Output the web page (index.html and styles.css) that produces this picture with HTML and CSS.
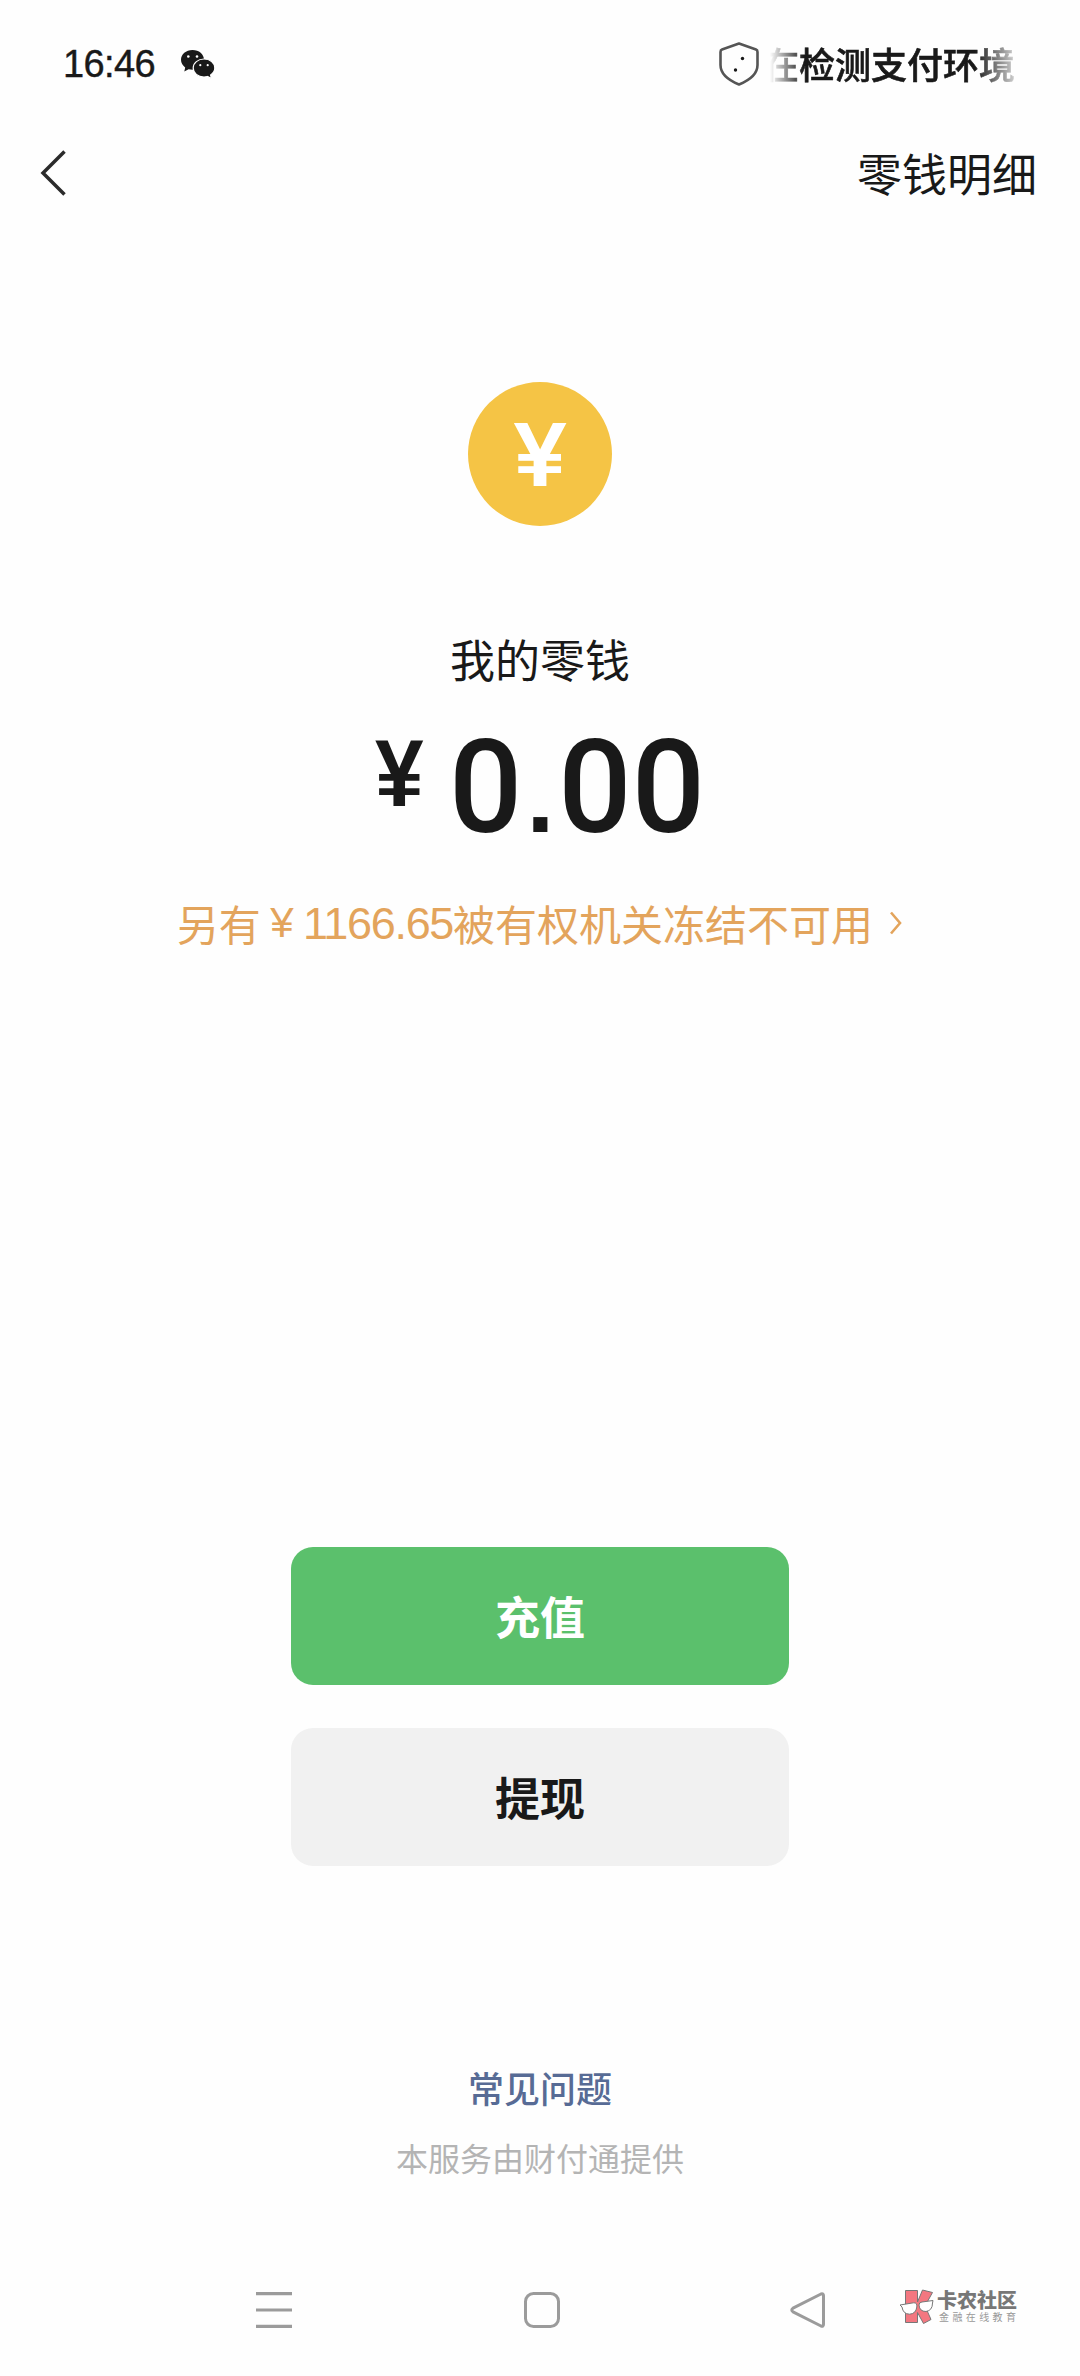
FILE: index.html
```html
<!DOCTYPE html>
<html lang="zh-CN">
<head>
<meta charset="utf-8">
<title>零钱</title>
<link rel="stylesheet" href="styles.css">
</head>
<body>
<div class="screen">
  <header class="status">
    <span class="time">16:46</span>
    <svg class="wechat" width="36" height="32" viewBox="0 0 36 32">
      <path fill="#191919" d="M12.500 2C6 2 1 6.300 1 11.800c0 3.100 1.600 5.800 4.200 7.600L4.300 23.500l4.300-2.200c1.200.3 2.600.5 3.900.5 6.500 0 11.500-4.400 11.500-10S19 2 12.500 2z"/>
      <path fill="#191919" stroke="#fff" stroke-width="1.200" d="M24 11c-6 0-10.800 4-10.800 9s4.800 9 10.800 9c1.200 0 2.400-.2 3.500-.5l4 2-.9-3.600c2.600-1.700 4.200-4.100 4.200-6.900 0-5-4.800-9-10.800-9z"/>
      <g fill="#fff"><circle cx="8.300" cy="8.500" r="1.300"/><circle cx="17" cy="8.500" r="1.300"/><circle cx="20.300" cy="17.200" r="1.100"/><circle cx="27.700" cy="17.200" r="1.100"/></g>
    </svg>
    <div class="security">
      <svg class="shield" width="42" height="46" viewBox="0 0 42 46">
        <path fill="none" stroke="#555" stroke-width="2.600" stroke-linejoin="round" d="M21 2.500 L38 8.500 Q39.500 9 39.500 11 V24 Q39.500 36 21 43.500 Q2.500 36 2.500 24 V11 Q2.500 9 4 8.500 Z"/>
        <circle cx="24.500" cy="17.500" r="1.700" fill="#191919"/><circle cx="17.500" cy="29" r="1.700" fill="#191919"/>
      </svg>
      <div class="ticker"><span>在检测支付环境</span></div>
    </div>
  </header>
  <nav class="navbar">
    <svg width="26" height="48" viewBox="0 0 26 48"><path fill="none" stroke="#2b2b2b" stroke-width="3.500" d="M24.500 2.500 L3 24 L24.500 45.500"/></svg>
    <span>零钱明细</span>
  </nav>
  <main class="content">
    <div class="coin"><span>¥</span></div>
    <h1 class="title">我的零钱</h1>
    <div class="amount"><span class="yen">¥</span><span class="value">0<span class="point">.</span>00</span></div>
    <div class="frozen">
      <span>另有</span><span class="frozen-yen">¥</span><span class="frozen-num">1166.65</span><span>被有权机关冻结不可用</span>
      <svg width="14" height="26" viewBox="0 0 14 26"><path fill="none" stroke="#e3a45c" stroke-width="2.600" d="M2 2.500 L11 13 L2 23.500"/></svg>
    </div>
    <div class="actions">
      <button class="btn primary">充值</button>
      <button class="btn">提现</button>
    </div>
    <footer class="foot">
      <a class="faq">常见问题</a>
      <p class="provider">本服务由财付通提供</p>
    </footer>
  </main>
  <div class="sysbar">
    <svg class="menu" width="36" height="36" viewBox="0 0 36 36"><path stroke="#9b9b9b" stroke-width="3.200" d="M0 1.600H36M0 18H36M0 34.400H36"/></svg>
    <svg class="home" width="36" height="36" viewBox="0 0 36 36"><rect x="1.500" y="1.500" width="33" height="33" rx="8" fill="none" stroke="#9b9b9b" stroke-width="3"/></svg>
    <svg class="back" width="36" height="36" viewBox="0 0 36 36"><path fill="none" stroke="#9b9b9b" stroke-width="3" stroke-linejoin="round" d="M3 16.200 L31 2 Q33.500 1 33.500 3.800 V32.200 Q33.500 35 31 34 L3 19.800 Q.5 18 3 16.200Z"/></svg>
    <div class="brand">
      <svg width="36" height="38" viewBox="0 0 36 38">
        <path fill="#f37780" stroke="#777" stroke-width="1" stroke-linejoin="round" d="M6.500 2.500H18.500V14L23.500 2L33.500 4.500L26 18L32 31.500L24.500 35.500L18.500 24.500V34.500H6.500Z"/>
        <path fill="#fff" stroke="#777" stroke-width="1" d="M1 17 L14.500 14.800 Q18.500 14.500 17.800 19 Q17 25.800 10.500 26.200 Q4 26 3 19Z"/>
        <path fill="#fff" stroke="#777" stroke-width="1" d="M20 17 Q20 14.200 23 14 L34 12.500 L33.500 15 Q33.500 22.500 27 23.500 Q20.500 23.500 20 17Z"/>
      </svg>
      <div class="brand-text"><b>卡农社区</b><small>金融在线教育</small></div>
    </div>
  </div>
</div>
</body>
</html>
```
FILE: styles.css
```css
* { box-sizing: border-box; margin: 0; padding: 0; }
body { background: #fff; }
.screen {
  width: 1080px; height: 2376px; background: #fefefe; color: #191919;
  font-family: "Liberation Sans", "Noto Sans CJK SC", sans-serif;
  display: flex; flex-direction: column; overflow: hidden;
}
svg { display: block; flex: none; }
.status { height: 128px; padding: 0 65px 0 63px; display: flex; align-items: center; }
.time { font-size: 38px; line-height: 44px; letter-spacing: -.6px; -webkit-text-stroke: .4px #191919; }
.wechat { margin-left: 25px; }
.security { margin-left: auto; display: flex; align-items: center; }
.ticker {
  width: 245px; margin-left: 10px; height: 50px; margin-top: -2px; overflow: hidden; display: flex; justify-content: flex-end;
  -webkit-mask-image: linear-gradient(90deg, transparent 0, #000 34px, #000 205px, transparent 255px);
  mask-image: linear-gradient(90deg, transparent 0, #000 34px, #000 205px, transparent 255px);
}
.ticker span { flex: none; font-size: 36px; line-height: 50px; font-weight: 500; white-space: nowrap; -webkit-text-stroke: .6px #191919; font-family: "Noto Sans CJK SC", sans-serif; }
.navbar { height: 90px; padding: 0 43px 0 40px; display: flex; align-items: center; justify-content: space-between; font-size: 45px; line-height: 66px; font-family: "Noto Sans CJK SC", sans-serif; }
.content { height: 2034px; padding-top: 164px; display: flex; flex-direction: column; align-items: center; }
.coin { width: 144px; height: 144px; border-radius: 50%; background: #f5c445; color: #fff; display: flex; align-items: center; justify-content: center; font: 600 86px/144px Inter, sans-serif; }
.coin span { padding-top: 2px; transform: scaleX(1.14); }
.title { margin-top: 100px; font-size: 45px; line-height: 66px; font-weight: 400; font-family: "Noto Sans CJK SC", sans-serif; }
.amount { margin-top: 21px; height: 150px; display: flex; align-items: flex-start; }
.yen { width: 74px; padding-top: 10px; font: 700 95px/100px "Liberation Sans", sans-serif; transform: scaleX(.92); transform-origin: 0 0; }
.value { font: 500 129px/150px Roboto, sans-serif; white-space: nowrap; }
.point { display: inline-block; width: 36px; text-align: center; font: 700 100px/100px "Liberation Sans", sans-serif; }
.frozen { margin-top: 28px; height: 64px; display: flex; align-items: center; color: #e3a45c; font-size: 42px; line-height: 64px; white-space: nowrap; font-family: "Noto Sans CJK SC", sans-serif; }
.frozen-yen { font: 400 42px/64px "Liberation Sans", sans-serif; width: 42px; text-align: center; }
.frozen-num { font: 400 45px/64px "Liberation Sans", sans-serif; letter-spacing: -1.3px; padding-top: 2px; }
.frozen svg { margin-left: 16px; }
.actions { margin-top: 592px; display: flex; flex-direction: column; gap: 43px; }
.btn { width: 498px; height: 138px; border: 0; border-radius: 22px; background: #f1f1f1; color: #191919; font: 700 45px/66px "Noto Sans CJK SC", sans-serif; }
.primary { background: #5bc06c; color: #fff; }
.foot { margin-top: 194px; text-align: center; font-family: "Noto Sans CJK SC", sans-serif; }
.faq { display: block; font-size: 36px; line-height: 54px; font-weight: 500; color: #576b95; }
.provider { margin-top: 19px; font-size: 32px; line-height: 48px; color: #b4b4b4; }
.sysbar { height: 124px; padding: 40px 0 0 256px; display: flex; align-items: flex-start; }
.home { margin-left: 232px; }
.back { margin-left: 230px; }
.brand { margin-left: 73px; margin-top: -4px; display: flex; }
.brand-text { margin-left: 2px; display: flex; flex-direction: column; font-family: "Noto Sans CJK SC", sans-serif; color: #777; white-space: nowrap; }
.brand-text b { font-size: 20px; line-height: 23px; font-weight: 900; }
.brand-text small { margin-left: 2px; font-size: 10px; line-height: 12px; letter-spacing: 3.400px; color: #999; }
```
